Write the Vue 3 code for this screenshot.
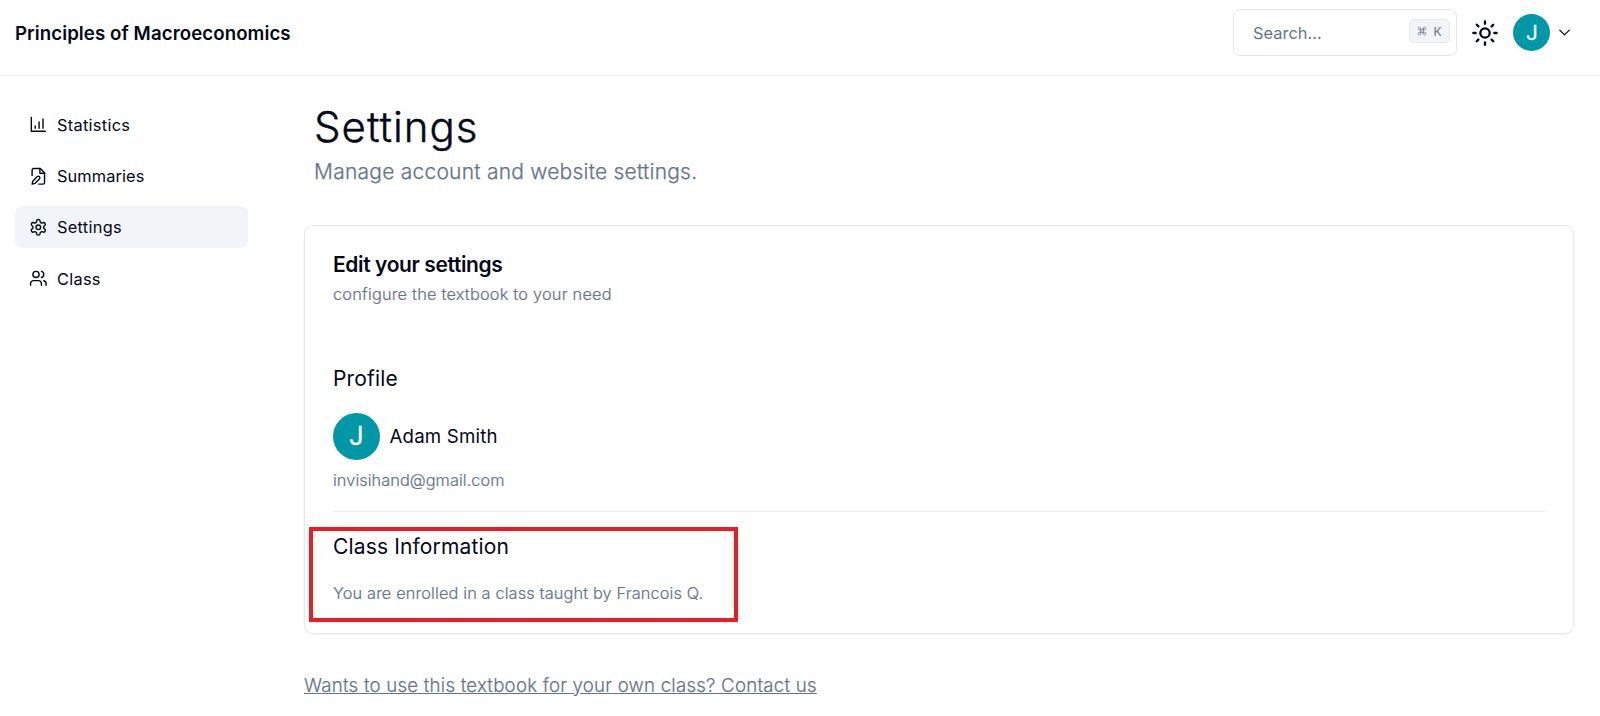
<script setup>
const nav = [
  { id: 'stats', label: 'Statistics' },
  { id: 'summaries', label: 'Summaries' },
  { id: 'settings', label: 'Settings', active: true },
  { id: 'class', label: 'Class' },
]
</script>

<template>
  <div class="page">
    <header class="header">
      <div class="brand">Principles of Macroeconomics</div>
      <div class="tools">
        <div class="search">
          <span>Search...</span>
          <kbd class="kbd"><svg class="cmd" viewBox="0 0 24 24"><path d="M15 6v12a3 3 0 1 0 3-3H6a3 3 0 1 0 3 3V6a3 3 0 1 0-3 3h12a3 3 0 1 0-3-3" /></svg><span>K</span></kbd>
        </div>
        <svg class="sun" viewBox="0 0 24 24"><circle cx="12" cy="12" r="4" /><path d="M12 2v2M12 20v2M4.93 4.93l1.41 1.41M17.66 17.66l1.41 1.41M2 12h2M20 12h2M6.34 17.66l-1.41 1.41M19.07 4.93l-1.41 1.41" /></svg>
        <div class="avatar small">J</div>
        <svg class="chevron" viewBox="0 0 24 24"><path d="m6 9 6 6 6-6" /></svg>
      </div>
    </header>
    <div class="body">
      <nav class="nav">
        <a v-for="n in nav" :key="n.id" class="item" :class="[n.id, { active: n.active }]">
          <svg class="icon" viewBox="0 0 24 24">
            <template v-if="n.id === 'stats'"><path d="M3 3v18h18M18 17V5M13 17V9M8 17v-3" /></template>
            <template v-else-if="n.id === 'summaries'"><path d="M14 2v6h6" /><path d="M4 11V4a2 2 0 0 1 2-2h8.5L20 7.5V20a2 2 0 0 1-2 2h-5.5" /><path d="M10.42 12.61a2.1 2.1 0 1 1 2.97 2.97L7.95 21 4 22l.99-3.95 5.43-5.44Z" /></template>
            <template v-else-if="n.id === 'settings'"><path d="M12.22 2h-.44a2 2 0 0 0-2 2v.18a2 2 0 0 1-1 1.73l-.43.25a2 2 0 0 1-2 0l-.15-.08a2 2 0 0 0-2.73.73l-.22.38a2 2 0 0 0 .73 2.73l.15.1a2 2 0 0 1 1 1.72v.51a2 2 0 0 1-1 1.74l-.15.09a2 2 0 0 0-.73 2.73l.22.38a2 2 0 0 0 2.73.73l.15-.08a2 2 0 0 1 2 0l.43.25a2 2 0 0 1 1 1.73V20a2 2 0 0 0 2 2h.44a2 2 0 0 0 2-2v-.18a2 2 0 0 1 1-1.73l.43-.25a2 2 0 0 1 2 0l.15.08a2 2 0 0 0 2.73-.73l.22-.39a2 2 0 0 0-.73-2.73l-.15-.08a2 2 0 0 1-1-1.74v-.5a2 2 0 0 1 1-1.74l.15-.09a2 2 0 0 0 .73-2.73l-.22-.38a2 2 0 0 0-2.73-.73l-.15.08a2 2 0 0 1-2 0l-.43-.25a2 2 0 0 1-1-1.73V4a2 2 0 0 0-2-2z" /><circle cx="12" cy="12" r="3" /></template>
            <template v-else><path d="M16 21v-2a4 4 0 0 0-4-4H6a4 4 0 0 0-4 4v2M22 21v-2a4 4 0 0 0-3-3.87M16 3.13a4 4 0 0 1 0 7.75" /><circle cx="9" cy="7" r="4" /></template>
          </svg>
          <span>{{ n.label }}</span>
        </a>
      </nav>
      <main class="main">
        <h1 class="title">Settings</h1>
        <p class="lead">Manage account and website settings.</p>
        <section class="card">
          <h2 class="card-title">Edit your settings</h2>
          <p class="muted">configure the textbook to your need</p>
          <h3 class="sub profile">Profile</h3>
          <div class="user"><div class="avatar">J</div><span class="name">Adam Smith</span></div>
          <p class="muted email">invisihand@gmail.com</p>
          <div class="rule"></div>
          <h3 class="sub info">Class Information</h3>
          <p class="muted enrolled">You are enrolled in a class taught by Francois Q.</p>
          <div class="highlight"></div>
        </section>
        <a class="contact">Wants to use this textbook for your own class? Contact us</a>
      </main>
    </div>
  </div>
</template>

<style>
body { background: #fff; }
</style>

<style scoped>
.page { box-sizing: border-box; height: 716px; overflow: hidden; font-family: Inter, "Liberation Sans", sans-serif; color: #020817; }
.page * { box-sizing: border-box; }
h1, h2, h3, p { margin: 0; font-weight: 400; }
svg { fill: none; stroke: currentColor; stroke-width: 2; stroke-linecap: round; stroke-linejoin: round; flex: none; }
.header { height: 76px; border-bottom: 1px solid #e9edf5; display: flex; justify-content: space-between; padding: 9px 29px 0 15px; }
.brand { font-size: 18.67px; font-weight: 600; line-height: 49px; letter-spacing: .08px; }
.tools { display: flex; align-items: center; height: 47px; }
.search { width: 224px; height: 47px; border: 1px solid #e2e8f0; border-radius: 7px; display: flex; align-items: center; justify-content: space-between; padding: 0 6px 0 19px; color: #64748b; font-size: 16.33px; letter-spacing: .05px; }
.kbd { display: flex; align-items: center; justify-content: center; gap: 6px; width: 41px; height: 24px; margin-bottom: 3px; border: 1px solid #e2e8f0; border-radius: 5px; background: #f1f5f9; font: 400 12px Inter, sans-serif; }
.cmd { width: 10px; height: 10px; }
.sun { width: 28px; height: 28px; margin-left: 14px; }
.avatar { width: 47px; height: 47px; border-radius: 50%; background: #0097a7; color: #fff; display: flex; align-items: center; justify-content: center; font: 25px Roboto, sans-serif; -webkit-text-stroke: .3px #fff; flex: none; }
.small { width: 37px; height: 37px; margin-left: 14px; font-size: 20px; padding-left: 1px; }
.chevron { width: 19px; height: 19px; margin-left: 5px; margin-right: -3px; stroke-width: 1.6; }
.body { display: flex; }
.nav { width: 233px; margin: 27.8px 0 0 15px; display: flex; flex-direction: column; gap: 9.33px; }
.item { height: 42px; border-radius: 7px; display: flex; align-items: center; padding-left: 14px; gap: 9.3px; font-size: 16.33px; letter-spacing: .3px; }
.item.summaries { letter-spacing: .12px; }
.active { background: #f1f5f9; }
.icon { width: 18.67px; height: 18.67px; stroke-width: 1.8; }
.main { width: 1270px; margin-left: 56px; }
.title { font-size: 42px; font-weight: 300; line-height: 50px; margin: 26px 0 0 10px; letter-spacing: 1px; -webkit-text-stroke: .4px currentColor; }
.lead { font-size: 21px; font-weight: 300; line-height: 32px; margin: 4px 0 0 10px; color: #64748b; letter-spacing: .23px; -webkit-text-stroke: .25px currentColor; }
.card { position: relative; height: 409px; margin-top: 37px; border: 1px solid #e2e8f0; border-radius: 9px; padding: 27px 28px 0 28px; box-shadow: 0 1px 2px rgba(0,0,0,.05); }
.card-title { font-size: 21px; font-weight: 600; line-height: 24px; letter-spacing: -.39px; }
.muted { font-size: 16.33px; font-weight: 300; line-height: 24px; color: #64748b; margin-top: 5px; letter-spacing: .21px; -webkit-text-stroke: .2px currentColor; }
.sub { font-size: 21px; line-height: 32px; letter-spacing: .15px; }
.profile { margin-top: 57px; }
.user { display: flex; align-items: center; gap: 9.5px; margin-top: 18px; }
.name { font-size: 18.67px; letter-spacing: .2px; line-height: 24px; padding-top: 1px; }
.email { margin-top: 8px; letter-spacing: .05px; }
.rule { height: 1px; background: #e6ebf4; margin-top: 19px; }
.info { margin-top: 19px; }
.enrolled { margin-top: 18px; letter-spacing: .13px; }
.highlight { position: absolute; left: 4px; top: 301px; width: 429px; height: 95px; border: 4px solid #ed1c24; }
.contact { display: inline-block; margin-top: 38px; font-size: 18.67px; font-weight: 300; line-height: 28px; color: #64748b; text-decoration: underline; letter-spacing: .22px; -webkit-text-stroke: .2px currentColor; }
</style>
